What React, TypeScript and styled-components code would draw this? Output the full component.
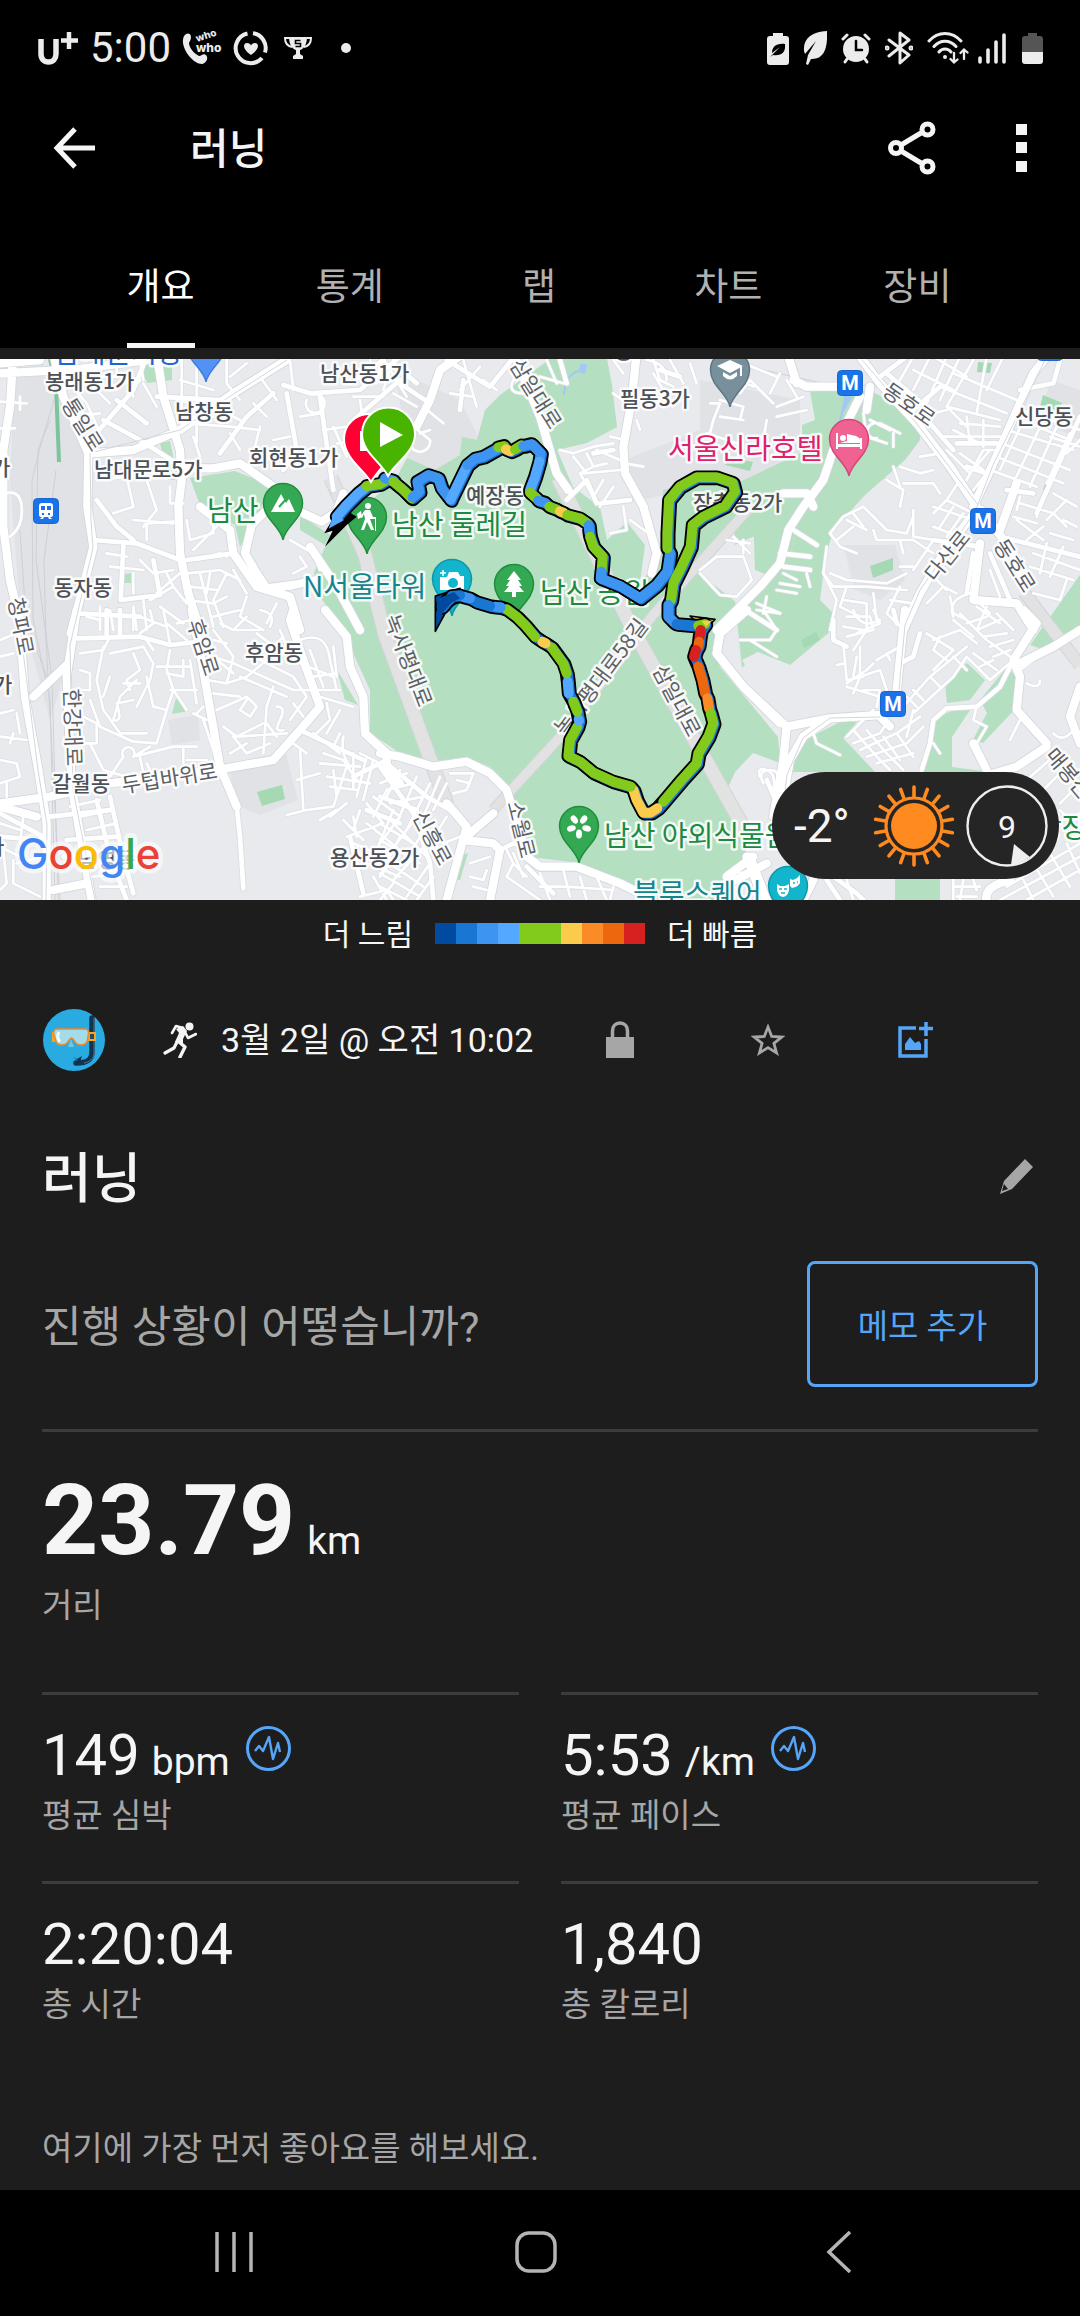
import React from "react";
import styled, { createGlobalStyle, css } from "styled-components";

const FONT = `Roboto, "Noto Sans CJK KR", sans-serif`;
const KR = `"Noto Sans CJK KR", sans-serif`;

const color = {
  bar: "#000000",
  page: "#1d1d1d",
  text: "#f5f5f5",
  muted: "#a6a6a6",
  tab: "#b1b1b1",
  line: "#3c3c3c",
  blue: "#55a5f8",
};

const GlobalStyle = createGlobalStyle`
  * { box-sizing: border-box; }
  body { margin: 0; background: ${color.bar}; font-family: ${FONT}; color: ${color.text}; }
  h1, h2, p, dl, dd, dt, ul { margin: 0; padding: 0; font-weight: 400; }
  svg { display: block; flex: none; }
`;

/* ---------- layout ---------- */

const Screen = styled.div`
  display: flex;
  flex-direction: column;
  min-height: 100vh;
  background: ${color.page};
`;

const TopBar = styled.header`
  background: ${color.bar};
`;

const StatusBar = styled.div`
  display: flex;
  align-items: center;
  justify-content: space-between;
  height: 96px;
  padding: 0 37px;
  color: #ececec;
`;

const StatusGroup = styled.div<{ $gap: number }>`
  display: flex;
  align-items: center;
  gap: ${(p) => p.$gap}px;
`;

const Clock = styled.time`
  font-size: 42px;
  line-height: 48px;
`;

const MoreDot = styled.span`
  width: 10px;
  height: 10px;
  margin-left: 18px;
  border-radius: 50%;
  background: currentColor;
`;

const plainButton = css`
  display: flex;
  align-items: center;
  justify-content: center;
  margin: 0;
  padding: 0;
  border: 0;
  background: none;
  color: inherit;
  font-family: inherit;
  cursor: pointer;
`;

const IconButton = styled.button<{ $width: number; $color?: string }>`
  ${plainButton}
  flex: none;
  width: ${(p) => p.$width}px;
  height: 84px;
  color: ${(p) => p.$color ?? "inherit"};
`;

const Toolbar = styled.div`
  display: flex;
  align-items: center;
  height: 104px;
  padding: 0 16px 0 32px;
`;

const ToolbarTitle = styled.h1`
  flex: 1;
  padding: 4px 0 0 74px;
  font-size: 42px;
  font-weight: 500;
  line-height: 56px;
`;

const Tabs = styled.nav`
  display: grid;
  grid-template-columns: repeat(5, 1fr);
  height: 148px;
  padding: 20px 68px 0 66px;
`;

const TabCell = styled.div`
  display: flex;
  justify-content: center;
`;

const Tab = styled.button<{ $active?: boolean }>`
  ${plainButton}
  border-top: 5px solid transparent;
  border-bottom: 5px solid ${(p) => (p.$active ? "#f5f5f5" : "transparent")};
  color: ${(p) => (p.$active ? "#ffffff" : color.tab)};
  font-size: 37px;
`;

const MapSection = styled.section`
  position: relative;
  margin-top: 11px;
  overflow: hidden;
  background: #e8eaed;
`;

const MapDrawing = styled.svg`
  width: 100%;
  height: auto;
`;

const WeatherPill = styled.div`
  position: absolute;
  right: 21px;
  bottom: 21px;
  display: flex;
  align-items: center;
  gap: 10px;
  width: 287px;
  height: 107px;
  padding: 0 10px 0 22px;
  border-radius: 54px;
  background: #252525;
`;

const Temperature = styled.span`
  flex: 1;
  font-size: 46px;
`;

const Legend = styled.div`
  display: flex;
  align-items: center;
  justify-content: center;
  gap: 22px;
  height: 66px;
  font-size: 30px;
  line-height: 40px;
`;

const LegendText = styled.span`
  padding-top: 4px;
`;

const LegendScale = styled.div`
  display: flex;
`;

const Swatch = styled.span<{ $fill: string }>`
  width: 21px;
  height: 21px;
  background: ${(p) => p.$fill};
`;

const ActivityRow = styled.div`
  display: flex;
  align-items: center;
  height: 148px;
  padding: 0 90px 0 43px;
`;

const ActivityWhen = styled.p`
  display: flex;
  flex: 1;
  align-items: center;
  gap: 24px;
  padding-left: 58px;
  font-size: 34px;
  line-height: 46px;
  white-space: nowrap;
`;

const TitleRow = styled.div`
  display: flex;
  align-items: center;
  justify-content: space-between;
  height: 126px;
  padding: 0 22px 0 42px;
`;

const ActivityTitle = styled.h2`
  padding-top: 6px;
  font-size: 54px;
  font-weight: 500;
  line-height: 68px;
`;

const Body = styled.div`
  padding: 0 42px;
`;

const NoteRow = styled.div`
  display: flex;
  align-items: center;
  justify-content: space-between;
  padding: 21px 0 42px;
`;

const Prompt = styled.p`
  padding-top: 6px;
  color: ${color.muted};
  font-size: 43px;
  line-height: 56px;
`;

const NoteButton = styled.button`
  ${plainButton}
  width: 231px;
  height: 126px;
  border: 3px solid ${color.blue};
  border-radius: 8px;
  color: ${color.blue};
  font-size: 33px;
`;

const StatGrid = styled.dl`
  display: grid;
  grid-template-columns: 1fr 1fr;
  column-gap: 42px;
`;

const Stat = styled.div<{ $wide?: boolean }>`
  display: flex;
  flex-direction: column-reverse;
  justify-content: flex-end;
  grid-column: ${(p) => (p.$wide ? "1 / -1" : "auto")};
  min-height: ${(p) => (p.$wide ? 263 : 189)}px;
  padding-top: ${(p) => (p.$wide ? 31 : 26)}px;
  border-top: 3px solid ${color.line};
`;

const StatLabel = styled.dt`
  margin-top: 7px;
  color: ${color.muted};
  font-size: 33px;
  line-height: 40px;
`;

const StatValue = styled.dd<{ $wide?: boolean }>`
  display: flex;
  align-items: baseline;
  gap: 12px;
  font-size: ${(p) => (p.$wide ? 98 : 58)}px;
  font-weight: ${(p) => (p.$wide ? 700 : 400)};
  line-height: ${(p) => (p.$wide ? 116 : 68)}px;
`;

const Unit = styled.span`
  font-size: 39px;
  font-weight: 400;
  line-height: 40px;
`;

const ZoneButton = styled.button`
  ${plainButton}
  align-self: flex-start;
  margin: 5px 0 0 4px;
  color: ${color.blue};
`;

const Likes = styled.p`
  padding: 57px 42px 19px;
  color: ${color.muted};
  font-size: 33px;
  line-height: 44px;
`;

const SystemNav = styled.footer`
  display: grid;
  grid-template-columns: repeat(3, 1fr);
  justify-items: center;
  align-items: center;
  height: 126px;
  margin-top: auto;
  padding: 0 90px 2px 83px;
  background: ${color.bar};
  color: #b4b4b4;
`;

/* ---------- status icons ---------- */

const Carrier = () => (
  <svg width="42" height="34" viewBox="0 0 42 34" fill="none" stroke="currentColor">
    <path d="M4 8v15c0 5 3 8 7.500 8s7.500-3 7.500-8V8" strokeWidth="5.500" />
    <path d="M32 1v17M24 9.500h17" strokeWidth="4.500" />
  </svg>
);

const WhoCall = () => (
  <svg width="40" height="36" viewBox="0 0 40 36" fill="currentColor">
    <path d="M2 6c3-4 7-3 7 1 0 4-2 4-2 7 1 5 6 10 10 12 3 0 4-3 7-1 3 3 0 8-4 9C10 34-3 16 2 6z" />
    <g fontFamily="Inter, sans-serif" fontWeight="800">
      <text x="15" y="12" fontSize="10" transform="rotate(-18 15 12)">who</text>
      <text x="14" y="22" fontSize="12">who</text>
    </g>
  </svg>
);

const HeartRing = () => (
  <svg width="36" height="36" viewBox="0 0 36 36" fill="none" stroke="currentColor" strokeWidth="4">
    <path d="M20 3.200A15 15 0 0 1 32 22.500M29 28A15 15 0 1 1 14.500 3.500" />
    <path d="M18 25c-9-6-8-12-4-12 2 0 3.500 1 4 2.500C18.500 14 20 13 22 13c4 0 5 6-4 12z" fill="currentColor" stroke="none" />
  </svg>
);

const Trophy = () => (
  <svg width="32" height="24" viewBox="-4 0 32 24" fill="none" stroke="currentColor" strokeWidth="2">
    <path d="M5 2H1c0 5 2 8 7 9M23 2h4c0 5-2 8-7 9" />
    <path d="M5 1h18c0 7-3 12-7 13v4l3 2v3H9v-3l3-2v-4C8 13 5 8 5 1z" fill="currentColor" stroke="none" />
    <path d="M16.500 4.500h-5v3h5v3h-5" stroke="#000" strokeWidth="1.600" />
  </svg>
);

const BatteryLeaf = () => (
  <svg width="22" height="33" viewBox="0 0 22 33" fill="currentColor">
    <path d="M6 4V1h10v3h3q3 0 3 3v23q0 3-3 3H3q-3 0-3-3V7q0-3 3-3z" />
    <path d="M3 25l3-2c8 1 13-2 12-11C9 11 5 15 5 21l8-6-6 6z" fill="#000" />
  </svg>
);

const Leaf = () => (
  <svg width="24" height="34" viewBox="0 0 24 34" fill="currentColor">
    <path d="M24 0C9 1 0 7 1 20l1 3 11-13L5 24 3 33l2 1 3-6c10 0 17-5 16-28z" />
  </svg>
);

const Alarm = () => (
  <svg width="30" height="32" viewBox="0 0 30 32" fill="none" stroke="currentColor" strokeLinecap="round">
    <path d="M2 7l4-4M28 7l-4-4M6 27l-2 3M24 27l2 3" strokeWidth="3" />
    <circle cx="15" cy="17" r="13" fill="currentColor" stroke="none" />
    <path d="M15 9v9h6" stroke="#000" strokeWidth="2.500" />
  </svg>
);

const Bluetooth = () => (
  <svg width="28" height="34" viewBox="0 0 28 34" fill="none" stroke="currentColor" strokeWidth="3" strokeLinejoin="round" strokeLinecap="round">
    <path d="M4 9l20 15-9 8V2l9 7L4 25" />
    <circle cx="2" cy="17" r="1" /><circle cx="26" cy="17" r="1" />
  </svg>
);

const Wifi = () => (
  <svg width="42" height="34" viewBox="0 0 42 34" fill="none" stroke="currentColor" strokeWidth="3" strokeLinecap="round">
    <path d="M2 10C11 0 25 0 34 10M7 15.500c6-7 16-7 22 0M12 21c3-4 9-4 12 0" />
    <circle cx="18" cy="26" r="2" fill="currentColor" stroke="none" />
    <path d="M27 22v9m-3.500-3l3.500 3.500 3.500-3M37 28v-9m-3.500 3l3.500-3.500 3.500 3" strokeWidth="2.300" />
  </svg>
);

const Signal = () => (
  <svg width="30" height="32" viewBox="0 0 30 32" stroke="currentColor" strokeWidth="3.600" strokeLinecap="round">
    <path d="M2 26v4M10 18v12M18 10v20M26 3v27" />
  </svg>
);

const Battery = () => (
  <svg width="21" height="32" viewBox="0 0 21 32">
    <path d="M6 4V1h9v3h3q3 0 3 3v13H0V7q0-3 3-3z" fill="#555" />
    <path d="M0 20h21v9q0 3-3 3H3q-3 0-3-3z" fill="currentColor" />
  </svg>
);

/* ---------- page icons ---------- */

const BackArrow = () => (
  <svg width="42" height="42" viewBox="0 0 42 42" fill="none" stroke="currentColor" strokeWidth="5">
    <path d="M22 2L4 21l18 19M4 21h38" />
  </svg>
);

const Share = () => (
  <svg width="48" height="54" viewBox="0 0 48 54" fill="none" stroke="currentColor" strokeWidth="5">
    <path d="M13 24l20-12M13 30l20 12" />
    <circle cx="8" cy="27" r="5.500" /><circle cx="39.500" cy="8.500" r="5.500" /><circle cx="39.500" cy="45.500" r="5.500" />
  </svg>
);

const More = () => (
  <svg width="12" height="50" viewBox="0 0 12 50" fill="currentColor">
    <path d="M0 1h11v11H0zM0 19h11v11H0zM0 38h11v11H0z" />
  </svg>
);

const Avatar = () => (
  <svg width="62" height="62" viewBox="0 0 62 62" role="img" aria-label="프로필">
    <circle cx="31" cy="31" r="31" fill="#29abe2" />
    <path d="M49 9v34c0 8-5 11-16 11" fill="none" stroke="#0d3552" strokeWidth="5.500" strokeLinecap="round" />
    <path d="M51 9v35c0 6-5 9-10 10" fill="none" stroke="#58738a" strokeWidth="1" />
    <path d="M30 48l4 2 5-3-2 6z" fill="#0d3552" />
    <path d="M9 23h4v10H9zM44 23h9v9h-9z" fill="#f9a61b" />
    <path d="M47 25h4v5h-4z" fill="#29485f" />
    <path d="M14 20h28q4 0 3.500 5l-1 6q-1 5-6 5-5 0-7-4-2-3-3-3t-3 3q-2 4-7 4-5 0-6-5l-2-6q0-5 3.500-5z" fill="#a5dbe8" stroke="#e98b2a" strokeWidth="1.600" />
    <path d="M16 23q-3 5 1 10" stroke="#f0fbff" strokeWidth="3" fill="none" />
    <path d="M25 38l3-8 3 8" fill="#6fc7e4" />
  </svg>
);

const Runner = () => (
  <svg width="34" height="36" viewBox="0 0 34 36" fill="none" stroke="currentColor" strokeLinejoin="round" strokeLinecap="round">
    <circle cx="26.500" cy="4.500" r="4" fill="currentColor" stroke="none" />
    <path d="M20 4l4 5-4 8 0 4-8-1 4-9-3-4z" fill="currentColor" stroke="none" />
    <path d="M21 8l4 8 8-4M9 11l4-7 7 2" strokeWidth="2.600" />
    <path d="M15 19l7 6-5 10" strokeWidth="3.400" />
    <path d="M14 20l-3 6-9 5" strokeWidth="3.200" />
  </svg>
);

const Lock = () => (
  <svg width="28" height="38" viewBox="0 0 28 38" fill="none" stroke="currentColor">
    <path d="M6.500 17v-7c0-5 3-8 7.500-8s7.500 3 7.500 8v7" strokeWidth="3.500" />
    <path d="M0 16h28v21H0z" fill="currentColor" stroke="none" />
  </svg>
);

const Star = () => (
  <svg width="34" height="34" viewBox="0 0 34 34" fill="none" stroke="currentColor" strokeWidth="2.800">
    <path d="M17 4l3.700 9.500 10 .5-7.800 6.300L25.600 30 17 24.600 8.400 30l2.700-9.700L3.300 14l10-.5z" />
  </svg>
);

const AddImage = () => (
  <svg width="36" height="38" viewBox="0 0 36 38" fill="none" stroke="currentColor" strokeWidth="3.500">
    <path d="M18 7H2v28h26V18M21 7.500h14M28 1v14" />
    <path d="M7 29v-6l5-7 5 6 4-2 2 3v6z" fill="currentColor" stroke="none" />
  </svg>
);

const Pencil = () => (
  <svg width="36" height="36" viewBox="0 0 36 36" fill="currentColor">
    <path d="M27 0l8 8-21 22-12 5 4-13zM6 25l-2 7 6-2z" fillRule="evenodd" />
  </svg>
);

const Pulse = () => (
  <svg width="45" height="45" viewBox="0 0 45 45" fill="none" stroke="currentColor">
    <circle cx="22.500" cy="22.500" r="21" strokeWidth="3" />
    <path d="M9 25l4-5 4 5 6-14 4 22 5-16 2 9" strokeWidth="2.400" strokeLinejoin="round" />
  </svg>
);

const Sun = () => (
  <svg width="82" height="82" viewBox="-41 -41 82 82" role="img" aria-label="맑음">
    <circle r="23" fill="#ff8a1f" />
    <circle r="28" fill="none" stroke="#ff8a1f" strokeWidth="3.200" />
    <g stroke="#ff8a1f" strokeWidth="3.600" strokeLinecap="round">
      {Array.from({ length: 18 }, (_, i) => (
        <path key={i} d="M0-29V-39" transform={`rotate(${i * 20})`} />
      ))}
    </g>
  </svg>
);

const Wind = () => (
  <svg width="84" height="84" viewBox="-42 -42 84 84" role="img" aria-label="풍속 9">
    <circle r="39.500" fill="none" stroke="#eee" strokeWidth="2.400" />
    <path d="M7 18l16 13q-9 7-19 8z" fill="#eee" />
    <text y="12" textAnchor="middle" fill="#f5f5f5" fontFamily="Roboto, sans-serif" fontSize="32">9</text>
  </svg>
);

/* ---------- map ---------- */

// The map is drawn in six tiles, each with three units to a pixel.
const Tile = ({ x, y, children }: { x: number; y: number; children: React.ReactNode }) => (
  <g transform={`translate(${x} ${y}) scale(0.33333)`}>{children}</g>
);

type Roads = { major: string; mid: string; local: string };

const tiles: { x: number; y: number; roads: Roads }[] = [
  {
    x: 0,
    y: 340,
    roads: {
      major:
        "M40 40L30 200 10 330 10 560 30 720 65 870M160 40L190 170 265 340 262 500 280 620 250 740 212 880M470 40L490 170 540 330 545 420 535 500 540 640 565 760 600 870M545 385L640 385 720 370 820 440 900 515 965 545 1010 515 1030 460M830 480L755 555 735 640 770 700 800 745 880 735 950 720M600 500L690 570 700 640 770 740 870 770 900 870M0 100L230 88 440 60M270 340L400 330 540 270 700 160 860 60M0 70L120 60M930 620L1010 740 1080 870",
      mid: "M280 600L410 610 540 660M290 480L350 560 400 600M370 620L362 780 480 765 460 660M280 290L400 150 440 50M310 240L420 300 545 380M350 180L440 250M1200 50L1080 150 930 160 850 135M960 170L985 350 1000 450M860 160L890 330 850 390M470 170L660 180M820 160L740 230 660 340M1050 250L1200 120M230 820L420 830M700 640L560 660M1050 130L1150 60",
      local:
        "M0 185L80 190M60 170L60 210M0 265L45 265M0 465Q60 440 65 500T30 590M190 110L260 190 300 280M210 200Q240 230 300 220M250 110L330 190M300 110L380 110 400 170M180 60L270 110M350 60L350 110M420 60L430 120M430 130L470 200M310 260L420 120M545 60V250M590 60L590 310M540 120L640 150M545 180L640 230M680 60L680 130 720 180M740 70L690 110M780 110L830 180M560 250L690 260 780 270M690 280L720 330M580 290L600 350M640 200L720 240M870 60L880 150M920 180A28 28 0 1 0 935 165M900 230L960 220M820 300L870 290M1000 260L1040 350M780 260L760 340M760 190L800 230M300 420L380 410 400 500 340 520M440 420L470 510 430 560M400 540L520 550M440 600L440 550 520 545M510 440V490H550M560 540L570 600 640 580 640 540M580 630L650 560M590 660L660 640 680 650M320 640L380 650M330 680L430 690M400 700V760M420 660L460 700 520 690M540 700L470 760M560 700L660 690 720 720M570 740L650 750M560 780L640 790 680 770M600 700L640 860M680 700L640 780 670 860M450 780L520 740 560 790M480 800L550 850M430 780L440 870M400 800L410 870M500 700L520 740M330 810L340 870M300 800V870M630 700L620 760M700 690L740 760M740 770L720 830 790 870M830 790L800 850M870 600L940 640 960 690M900 650L920 680 880 700M850 590L870 560M970 270L1040 260M1010 310L1080 300M1060 170L1150 170M1080 180L1090 250M1110 60L1130 130M1180 60L1150 150",
    },
  },
  {
    x: 380,
    y: 340,
    roads: {
      major: "M250 40L180 90 150 180 110 260M400 40L480 230 530 400 565 450M770 40L755 180 730 320 735 400 790 500 830 640 815 700",
      mid: "M200 60L330 140 395 60M0 90L40 70 110 130M60 130L150 190M250 120L240 210M540 60L560 130M840 90L900 110M560 480L620 420 650 490M660 490L750 480M640 340L700 330",
      local:
        "M0 40L80 170M40 160L110 200M130 200L190 250M90 310A25 25 0 1 0 150 300L100 260M120 280L150 270M210 160L280 170M250 60L290 200M300 80L240 150M310 120L350 150M400 120Q380 160 430 160M500 60L530 130M480 110L550 130M620 340L640 380 600 400 640 470M640 380L680 370M580 350L620 400M650 330L720 360M610 400L720 390M640 470L670 420M540 330L580 340 640 320 700 310M660 500L700 440M730 500L740 570 690 580M760 430L800 500M730 100L700 60M740 190L700 160M780 270L770 240M740 300L690 290M735 370L790 380M750 540L820 590M820 60L840 120 880 140M870 60L910 130M930 70L950 130M820 100L850 150 920 150M800 60Q860 70 860 120",
    },
  },
  {
    x: 700,
    y: 340,
    roads: {
      major:
        "M480 170L400 330 370 420 310 500 265 570 240 670 180 740 50 870M480 50L540 130 650 250 750 380 830 500M280 120L320 140 440 140M265 50L290 130M510 140L500 210M820 500L880 370 1000 100 1040 50M830 510L730 640 660 760 610 870M845 510L940 640 970 720M900 570L950 430M840 610L820 780 950 790 1000 870M250 460L320 460 340 500",
      mid: "M540 110L620 50M560 100L700 220M640 210L720 140M690 250L760 330M770 310L890 310M800 380L860 400M1080 60L1060 130 960 150M1140 230L1010 520M920 450L1000 460M280 570L350 615M250 680L330 690M900 590L1140 650M870 640L930 780M820 640L800 760M700 600L840 620M120 800L230 870M240 640L330 650",
      local:
        "M100 110L160 140M130 70L230 110M120 160L150 120 220 190M240 100L210 160M260 120L290 170M30 190L60 190 40 240 30 280M60 180L130 200 120 240M60 230L130 240M20 280L110 310M200 240L190 300M230 200L310 170M230 230L320 210M490 220L500 290 560 310M520 250A22 22 0 1 0 530 295M540 250L600 280M510 240L570 270M580 280V320M640 50L600 120M690 50L640 150M740 50L680 190M640 90L760 150M700 50L800 110M780 50L720 180M820 60L740 200M860 50L830 220M910 50L860 150M760 100L950 180M720 140L920 220M740 200L900 240M660 230L740 210M740 200L800 260M780 250L900 260M800 230L810 310M850 240L850 320M760 270L840 310M730 290L900 290M780 340L850 390M800 420L850 330 880 330M740 330L810 400 870 330M860 400L820 450M920 270L1120 330M905 310L1110 390M890 350L1090 430M870 390L1010 440M960 210L1140 270M990 200L900 390M1030 240L940 430M1070 260L990 440M1110 280L1040 430M940 230L1110 300M1050 290L1140 320M700 560L780 590M700 500L820 540M740 480L820 520M700 520L740 480 780 420M720 560L760 500M740 590L790 520M660 350L720 340M600 380L660 400 700 390M560 420L610 450 600 500M610 430L700 430 720 460M580 380L600 440M500 510L560 570 620 580 640 530M640 510V590L700 600M520 570L530 600 640 600M390 580L430 530 490 500 510 520M410 600L460 560M440 540L500 570M460 520L490 560M600 600L610 640M390 580L420 620 470 640M380 620L370 700 400 740 500 740 620 750M600 680L640 680M390 700L440 720 560 730 620 700M370 700L410 780 390 870M440 740L420 800 480 830M430 780L500 790 500 860M520 760L530 840M600 740L560 820 600 860M640 600L700 640M700 600L640 690M570 780L640 790M710 720L740 750M680 790L730 740 770 760M750 770L760 820 800 840M870 820L810 760Q740 780 760 830M830 800L900 850M860 800L830 870M890 820L940 870M940 530L1010 550M960 490L1060 520 1100 560M950 540L1030 600M980 600L1030 560M1010 530L1030 470M1060 460L1130 500M1040 540L1100 480M1090 540L1130 560M1050 580L1120 600M1000 640L1140 690M990 680L1120 720M1040 610L1020 700M1090 620L1050 710M1000 760L1080 780 1100 720M250 700L290 720M240 730L300 740M230 750L290 760M320 700L330 740M170 790L240 820M200 770L190 820M80 600L150 610M100 590L150 640M130 600V640M0 690L50 650 130 650 155 720 110 770 60 765 0 700M1100 340L1140 300M960 470L950 510M870 690L900 770",
    },
  },
  {
    x: 0,
    y: 610,
    roads: {
      major:
        "M60 50L75 260 115 480 140 640 140 870M230 0L200 200 215 530 275 870M575 0L610 180 660 470 710 590M0 580L150 560 330 520 650 480 820 450 900 360 960 290 910 150 870 30 880 0M975 0L1040 80 1050 170 1090 260 1095 370 1160 430 1160 480 1200 520M100 260L200 165M0 590L110 620M160 840L260 820",
      mid: "M230 85L420 80 510 105 600 95M320 0V80M360 0V80M200 690L350 680M190 740L340 720M150 620L330 600M710 590L720 680 730 835M290 570L330 740 380 870M330 560L370 740 400 850M0 680L120 690M900 360L1090 450M0 610L130 680M1200 640L1100 600M1090 850L1050 680M1160 450L1060 500",
      local:
        "M240 180L270 190V240L240 240M240 130L310 120 330 80M310 110L290 210 310 300 360 370 440 370M330 130L430 110 460 160 450 210 410 290M400 130L420 180 380 210 390 240M330 200L310 260M410 210L360 260 340 330Q370 340 350 280L400 270M370 220L420 220M440 200L460 290 500 300M270 270L300 350 400 395 470 400 500 300 520 240 500 180 510 120M440 90L460 120M470 170L570 170M510 240L590 240M500 190L550 200 550 150M520 240L560 300M580 310L620 330M570 150L590 280M250 320L290 340V400L250 400M270 400L310 480 380 500M450 410L400 440A18 18 0 1 0 370 440L330 500M400 440L520 410 590 410M550 410V460M420 440L430 490M560 450H620M440 460L460 500M610 330L640 420 660 490M590 310L610 290M620 210L680 220 740 200 800 150M640 250L720 260M650 300L740 260M700 190L640 140 610 110M680 100L640 90M680 220L700 140 640 60M720 200L860 260M780 150L880 200M640 140L700 160 880 240 940 240M740 270L720 300 750 320 770 290 740 260M670 350L710 380 860 370M690 430L740 400M700 380L740 430 810 400M790 430L800 290 820 230M710 380L790 340M800 340L830 380M830 290Q860 290 840 330T850 360M880 280L910 320M880 200L920 260 870 330M660 40L700 60 780 60M640 20L720 0M780 0Q830 10 810 50M700 60L740 20M770 70L850 130M850 80L800 130M840 60L860 110M900 90Q980 60 990 150L1010 240M930 120L970 230M900 160L1000 200M940 200L1010 190M960 260L1060 290M930 240L1020 240M1000 110L1010 200M980 280L990 330 940 380M1020 300L980 370M940 370L1020 430M1030 380Q1020 430 1050 470M970 430L1030 450 1070 510M960 460L1080 470M980 500L1110 520M990 530L1070 540M1000 480L1010 560M1060 430V540M1100 440L1070 560M1120 450L1090 570M1080 430L1140 460M1040 470L1000 590 920 600 860 615M900 420L910 600M890 510L960 490M880 400L920 430M960 630L1010 600M990 620L1040 580M1020 370L1000 410M1030 630L1090 690M1060 620L1070 680M1040 680L1150 640 1100 580M1120 560L1200 620M1160 540L1120 620M1180 600L1130 720M1200 680L1140 800M1060 700L1200 760M1100 640L1200 720M1100 760L1200 800M1080 600L1060 660M1120 800L1160 870M1180 820L1140 870M1080 860L1160 840 1180 870M50 760L130 740M0 310L40 300M0 380L80 390M30 400L40 370M0 450L50 460 60 500 0 520M20 520V560M50 310L60 370M0 140L40 130M0 90L50 70M0 840L20 820 10 720M40 750L40 820 120 860M0 640L60 660M0 710L60 740M70 620L60 700M300 570L210 590M240 620L340 600M260 660L350 640M300 830L380 830M280 800L370 790M260 20L300 30M400 0V60M450 0L460 40 420 70M420 20L500 50M490 0L510 100M530 40L570 30M500 40L560 90",
    },
  },
  {
    x: 380,
    y: 610,
    roads: {
      major:
        "M0 430L60 440 160 470 260 455 330 490 380 540 410 640 440 740 480 770 590 770 720 820 800 860M200 580L260 650 200 870M1100 0L1020 70 1010 130 1090 230 1200 340M340 610L270 670M1160 760L1030 830M1110 740L1160 870M250 690L340 700 360 720 330 870",
      mid: "M0 470L100 610 150 760 160 870M20 460L140 560 210 600M360 720L400 700 430 710M0 560L110 600M440 770L520 850M1160 510L1200 600",
      local:
        "M20 540L100 520M30 580L130 560M0 520L80 490M60 480L20 560M110 500L50 640M150 520L80 660M180 500L130 620M200 520L160 600M210 490L280 490 260 540 220 550M230 510L270 520M60 620L0 700M110 620L20 740M140 650L70 760M0 640L100 700M0 690L120 760M20 620L140 740M0 740L130 830M0 790L120 860M0 830L80 870M140 700L40 810M150 760L80 860M160 800L110 870M30 760L0 800M200 620L150 700M190 700L240 680M270 760L330 740M270 800L310 810 320 780M280 830L320 840M380 720L400 760 380 800 480 870M400 730L430 800M400 760L440 800M480 790L510 870M550 780L570 860M600 800L620 870M560 830L700 840M480 830L560 830M650 800L680 870M700 830L690 870M1150 520Q1130 480 1170 480T1180 540M1080 790L1120 780",
    },
  },
  {
    x: 700,
    y: 610,
    roads: {
      major:
        "M140 0L60 70 50 130 130 230 260 350 250 450 220 620M540 315L390 325 310 380 270 450 250 560M615 0L590 240M260 350L390 325M970 0L1010 40 940 150 960 200 950 300 1040 400M1140 230L1110 320 1140 400M1040 410L950 470 850 500M820 400L860 480M1140 60L1060 110 960 160M160 740L80 800M140 740L190 870M340 810L310 870M540 320L570 350M930 810Q850 830 860 870",
      mid: "M940 150L900 230 830 290 740 295 700 330 690 400 665 480M610 155L640 140 660 70M400 30L400 90 440 110M580 0L590 40M400 800L470 850 490 870M380 810L420 870M300 800L280 870",
      local:
        "M340 370L350 400 420 435M150 90L230 140M120 90L210 90 230 60 190 0M170 0L240 10M430 100L440 210 490 200M410 165L435 160M480 110L480 200M460 250L480 200 540 180 560 240M440 220L500 180 520 160M440 230L540 260M530 150L600 110M560 130L570 150M440 20L510 20 520 60 440 80M430 50L490 60M500 60L460 120M460 0Q480 60 540 30M520 0L540 40 470 70M470 140L460 200M490 240L540 240 530 290M610 290L690 200 800 110M640 310L760 200 800 140 870 210 940 150M680 70L760 120 700 180M700 90L780 60 830 100M760 30L820 80M780 10L860 90 930 140M720 80L700 120 740 150M800 40L860 20M830 60L900 30M850 80L920 70M870 110L940 90M880 140L930 120M690 200L720 230M640 240L670 270M620 260L650 290M820 130L890 180M840 170L880 150M760 140L800 180M440 380L520 300M460 400L540 370 560 340M480 420L590 370 660 320M500 440L620 400 670 350M530 460L640 430M460 360L530 440 570 480M500 360L560 430 610 480M550 380L600 450M590 370L640 440M640 300L620 380M700 400L720 430M830 290L820 330 860 350 830 400M960 330L930 390M980 220Q1020 240 1020 210M1060 370Q1090 400 1120 360M180 500Q170 470 200 480T220 540M1060 440L980 510M1100 470L1010 560M1140 520L1080 580M1140 700L920 830M1140 740L900 870M1140 780L980 870M1100 700L1140 790M1050 730L1110 830M1000 760L1060 860M960 790L1000 870M1080 600L1140 660M760 806V870M790 810L780 870M760 830H840M770 860H830M820 810L830 840M440 810L460 870M970 160Q1010 120 1000 150L960 180",
    },
  },
];

const RoadLayer = ({ kind, width, stroke }: { kind: keyof Roads; width: number; stroke: string }) => (
  <g fill="none" stroke={stroke} strokeWidth={width} strokeLinecap="round" strokeLinejoin="round">
    {tiles.map((t) => (
      <Tile key={`${t.x}-${t.y}`} x={t.x} y={t.y}>
        <path d={t.roads[kind]} />
      </Tile>
    ))}
  </g>
);

const pace = {
  navy: "#004a9f",
  deep: "#1976d2",
  blue: "#3d95f1",
  sky: "#55a8ff",
  green: "#82cb1d",
  yellow: "#fbcc4c",
  orange: "#fb8b27",
  rust: "#ec670d",
  red: "#d72121",
};

const legendScale = [
  pace.navy, pace.deep, pace.blue, pace.sky, pace.green,
  pace.green, pace.yellow, pace.orange, pace.rust, pace.red,
];

// Track pieces in the units of the upper middle tile.
const track: [keyof typeof pace, string][] = [
  ["sky", "-130,530 -100,495 -65,460 -40,440"],
  ["green", "-40,438 0,432 20,420"],
  ["blue", "15,415 40,422"],
  ["green", "40,425 70,450 95,475"],
  ["blue", "98,472 118,455 112,425 145,405 175,415 185,445 212,480"],
  ["sky", "212,478 240,420 262,375"],
  ["blue", "262,375 285,356 310,350 355,325"],
  ["green", "355,322 372,318"],
  ["yellow", "378,328 392,334"],
  ["green", "405,328 425,316"],
  ["blue", "430,318 455,312 482,340 478,365"],
  ["sky", "478,365 465,410 450,450"],
  ["green", "450,458 470,475"],
  ["blue", "475,482 495,488"],
  ["green", "508,500 530,508"],
  ["yellow", "540,514 550,518"],
  ["green", "562,525 600,535 622,550"],
  ["blue", "626,556 628,578"],
  ["green", "630,590 640,620 668,650 665,690"],
  ["blue", "664,695 662,715 720,738 780,775 830,735 862,695 870,640"],
  ["green", "862,625 862,580 867,480 900,440 950,412 1010,412 1058,428 1065,455 1035,498 970,530 938,555 932,620 905,680 880,730 873,780"],
  ["blue", "865,795 865,830 885,850"],
  ["deep", "890,852 950,857"],
  ["green", "955,857 975,852"],
  ["red", "962,870 958,895"],
  ["rust", "957,905 955,918"],
  ["red", "948,930 942,950"],
  ["rust", "955,980 967,1020 975,1060"],
  ["orange", "982,1075 987,1105"],
  ["green", "992,1120 1000,1150 985,1190 955,1240 950,1270 905,1320 850,1385"],
  ["yellow", "832,1405 812,1418 790,1418 770,1380 760,1350"],
  ["green", "752,1340 700,1325 640,1298 600,1265 565,1248 570,1200 592,1160"],
  ["sky", "597,1142 596,1138"],
  ["green", "592,1115 580,1085"],
  ["sky", "566,1060 563,1025"],
  ["green", "560,1000 550,970 515,922"],
  ["yellow", "497,910 487,905"],
  ["green", "465,890 435,855 410,830 380,808"],
  ["blue", "362,802 345,800"],
  ["deep", "330,798 290,786"],
  ["blue", "270,775 250,770"],
  ["deep", "240,766 215,768"],
  ["navy", "200,782 185,800"],
];

const tracePath = "M" + track.map(([, pts]) => pts).join(" ");

const Track = () => (
  <Tile x={380} y={340}>
    <g fill="none" strokeLinecap="round" strokeLinejoin="round">
      <path d="M-167 580L-120 500-70 530-100 555-165 620-142 572z" fill="#000" />
      <path d="M166 768L240 745 250 780 205 802 166 874z" fill={pace.navy} stroke="#000" strokeWidth="5" />
      <path d="M930 828L1005 838 975 870z" fill={pace.yellow} stroke="#000" strokeWidth="5" />
      <path d={tracePath} stroke="#000" strokeWidth="41" />
      <path d={tracePath} stroke="#000" strokeWidth="41" transform="translate(4 3)" />
      <path d={tracePath} stroke={pace.deep} strokeWidth="30" transform="translate(4 3)" />
      {track.map(([c, pts]) => (
        <path key={pts} d={`M${pts}`} stroke={pace[c]} strokeWidth="30" />
      ))}
      <path d="M-154 566L-138 518-108 540z" fill={pace.sky} />
      <path d="M170 778L222 756 240 775 200 796 172 850z" fill={pace.navy} />
      <path d="M965 842L996 842 978 860z" fill={pace.yellow} />
    </g>
  </Tile>
);

const labelInk = { area: "#4d5157", road: "#5c6066", park: "#1d8a42", sight: "#12858f", hotel: "#e0206b", market: "#1a66d6" };

type MapLabel = { t: string; x: number; y: number; r?: number; k?: keyof typeof labelInk };

const labels: MapLabel[] = [
  { t: "남대문시장", x: 54, y: 363, k: "market" },
  { t: "봉래동1가", x: 45, y: 389 },
  { t: "남산동1가", x: 320, y: 381 },
  { t: "남창동", x: 175, y: 419 },
  { t: "회현동1가", x: 249, y: 465 },
  { t: "남대문로5가", x: 94, y: 477 },
  { t: "가", x: -9, y: 475 },
  { t: "가", x: -7, y: 692 },
  { t: "사", x: -15, y: 854 },
  { t: "동자동", x: 54, y: 595 },
  { t: "예장동", x: 466, y: 503 },
  { t: "필동3가", x: 620, y: 406 },
  { t: "장충동2가", x: 693, y: 510 },
  { t: "신당동", x: 1015, y: 424 },
  { t: "후암동", x: 245, y: 660 },
  { t: "갈월동", x: 52, y: 791 },
  { t: "용산동2가", x: 330, y: 865 },
  { t: "남영동", x: 78, y: 867 },
  { t: "동", x: 614, y: 358 },
  { t: "남산", x: 207, y: 521, k: "park" },
  { t: "남산 둘레길", x: 392, y: 535, k: "park" },
  { t: "남산 공원", x: 540, y: 603, k: "park" },
  { t: "남산 야외식물원", x: 604, y: 846, k: "park" },
  { t: "광장", x: 1036, y: 838, k: "park" },
  { t: "N서울타워", x: 303, y: 597, k: "sight" },
  { t: "블루스퀘어", x: 633, y: 904, k: "sight" },
  { t: "서울신라호텔", x: 668, y: 459, k: "hotel" },
  { t: "통일로", x: 61, y: 404, r: 58, k: "road" },
  { t: "청파로", x: 8, y: 599, r: 79, k: "road" },
  { t: "한강대로", x: 64, y: 689, r: 88, k: "road" },
  { t: "후암로", x: 187, y: 622, r: 72, k: "road" },
  { t: "두텁바위로", x: 123, y: 793, r: -9, k: "road" },
  { t: "녹사평대로", x: 384, y: 618, r: 69, k: "road" },
  { t: "녹사평대로58길", x: 565, y: 737, r: -53, k: "road" },
  { t: "소월로", x: 507, y: 803, r: 76, k: "road" },
  { t: "신흥로", x: 412, y: 816, r: 62, k: "road" },
  { t: "삼일대로", x: 509, y: 365, r: 58, k: "road" },
  { t: "삼일대로", x: 652, y: 670, r: 62, k: "road" },
  { t: "동호로", x: 881, y: 394, r: 35, k: "road" },
  { t: "동호로", x: 993, y: 545, r: 58, k: "road" },
  { t: "다산로", x: 935, y: 583, r: -51, k: "road" },
  { t: "매봉산로", x: 1044, y: 756, r: 50, k: "road" },
];

const MapText = styled.text<{ $kind: keyof typeof labelInk }>`
  fill: ${(p) => labelInk[p.$kind]};
  stroke: #ffffff;
  stroke-opacity: 0.85;
  stroke-width: 5px;
  stroke-linejoin: round;
  paint-order: stroke;
  font-family: ${KR};
  font-weight: ${(p) => (p.$kind === "area" ? 500 : 400)};
  font-size: ${(p) => (p.$kind === "area" || p.$kind === "road" ? 21 : 28)}px;
`;

const GoogleMark = styled.text`
  font-family: Inter, sans-serif;
  font-size: 42px;
  font-weight: 500;
  stroke: #ffffff;
  stroke-opacity: 0.6;
  stroke-width: 9px;
  stroke-linejoin: round;
  paint-order: stroke;
`;

const Poi = ({ x, y, fill, edge, children }: { x: number; y: number; fill: string; edge: string; children?: React.ReactNode }) => (
  <g transform={`translate(${x} ${y})`}>
    <path d="M0 37C-2 24-19.500 16-19.500 0a19.500 19.500 0 0 1 39 0C19.500 16 2 24 0 37z" fill={fill} stroke={edge} strokeWidth="1.500" />
    <g fill="#fff">{children}</g>
  </g>
);

const Metro = ({ x, y }: { x: number; y: number }) => (
  <g transform={`translate(${x} ${y})`}>
    <rect x="-12.500" y="-12.500" width="25" height="25" rx="4" fill="#1a73e8" stroke="#1a66d0" />
    <text y="7" textAnchor="middle" fill="#fff" fontFamily="Roboto, sans-serif" fontWeight="700" fontSize="20">M</text>
  </g>
);

const CourseMap = () => (
  <MapDrawing viewBox="0 359 1080 541" role="img" aria-label="코스 지도">
    <rect y="359" width="1080" height="541" fill="#e8eaed" />
    <g fill="#e0e2e6">
      <path d="M15 370H55L90 450 95 560 75 640 50 720 20 610 10 480z" />
      <path d="M395 370L460 400 480 440 450 490 410 470z" />
      <path d="M700 430L700 380 800 400 800 470 690 490 640 500 625 460z" />
      <path d="M843 545L895 545 905 580 880 600 855 590z" />
      <path d="M230 770L285 750 298 800 260 815 236 805z" />
      <path d="M168 720L198 715 200 740 172 745zM1050 380L1080 390V440L1040 420z" />
    </g>
    <g fill="#b4dfc1">
      <path d="M330 535L314 573 322 600 347 630 353 653 370 690 370 733 400 753 430 762 467 757 490 767 510 787 523 823 530 857 580 863 620 880 647 900 713 900 730 873 747 857 740 817 727 790 735 772 753 753 780 763 778 737 720 667 713 643 737 610 753 563 767 575 790 560 800 500 790 485 803 465 802 425 815 420 810 391 870 391 900 405 920 425 920 440 905 460 865 495 833 530 825 560 820 600 833 613 832 630 790 665 757 652 742 668 735 600 695 570 727 530 753 510 790 480 750 484 720 478 663 490 660 560 640 582 645 545 627 522 607 540 600 507 573 487 557 450 587 443 617 427 612 385 607 359 550 359 500 395 485 410 477 440 462 437 460 455 435 470 407 458 395 480z" />
      <path d="M695 570L753 510 767 575 737 603z" fill="#e8eaed" />
      <path d="M753 510L800 500 790 560 770 576 755 570z" />
      <path d="M733 485L850 430 830 480 790 520 735 545z" />
      <path d="M300 515L330 535 325 545 300 530zM190 478L235 471 273 487 265 500 240 547 235 525 200 505z" />
      <path d="M13 360H43V365L15 366zM146 360L172 366V380L148 383 140 372zM160 443L170 441 178 480 168 480zM123 575L131 573V583L123 583z" />
      <path d="M176 698L188 711 172 714zM337 670L358 705 345 700z" />
      <path d="M797 744L840 722 857 722 843 738 875 772H793zM945 683L967 663 985 680 970 700 947 703z" />
      <path d="M1007 667L1017 677 1017 707 983 743 973 740 987 713 980 700zM933 720L953 710 970 710 952 737 952 767 990 772H922L930 745z" />
      <path d="M1030 645L1080 575V625L1045 650zM895 879H940V900H895z" />
      <path d="M462 855L468 853 460 880 456 880z" />
    </g>
    <path d="M742 660L758 652 790 665 840 640 835 700 850 712 800 722 778 722z" fill="#e8eaed" />
    <g fill="#a5d9b4">
      <path d="M870 566L893 558V570L873 578zM978 362L992 363 990 373 977 372zM1043 395L1062 403 1057 415 1040 407zM1048 476L1053 480 1048 493 1043 490zM257 792L282 785 285 799 262 806z" />
      <path d="M727 457L753 462 750 471 725 465zM801 640L816 632 820 640 804 648z" />
    </g>
    <path d="M50 359L56 385 59 462" fill="none" stroke="#7cc49b" strokeWidth="4" />
    <path d="M845 400L838 430 830 455M585 370L575 372 566 380 564 395" fill="none" stroke="#a3c7f7" strokeWidth="2" />
    <path d="M844 395L852 397 842 415zM580 364L587 364 585 374 579 372z" fill="#a3c7f7" />
    <g fill="none" stroke="#cdd0d5" strokeWidth="1">
      <path d="M54 400L42 440 32 480 33 620 50 700 55 900M50 420L38 450 36 560 52 680 58 900M56 470L44 560 46 640 60 900M20 530L26 620 48 680" />
      <path d="M720 360L830 385 880 386" />
    </g>
    <g fill="none" stroke="#d2d5d8" strokeLinecap="butt">
      <path d="M331 478L365 555 385 635 447 805" strokeWidth="15" />
      <path d="M558 478L633 630 745 830" strokeWidth="15" />
      <path d="M493 810L560 737 653 615 752 505" strokeWidth="11" />
      <path d="M1024 592L1045 620 1080 665" strokeWidth="13" />
      <g stroke="#e2e2e3">
        <path d="M331 478L365 555 385 635 447 805" strokeWidth="13" />
        <path d="M558 478L633 630 745 830" strokeWidth="13" />
        <path d="M493 810L560 737 653 615 752 505" strokeWidth="9" />
        <path d="M1024 592L1045 620 1080 665" strokeWidth="11" />
      </g>
    </g>
    <RoadLayer kind="local" width={12} stroke="#dcdfe4" />
    <RoadLayer kind="mid" width={19} stroke="#d9dce1" />
    <RoadLayer kind="major" width={30} stroke="#d3d6dc" />
    <RoadLayer kind="local" width={8} stroke="#ffffff" />
    <RoadLayer kind="mid" width={14} stroke="#ffffff" />
    <RoadLayer kind="major" width={25} stroke="#ffffff" />
    <g fill="none" stroke="#d3d6dc" strokeWidth="1">
      <path d="M90 453L180 430 235 393 287 360M90 453L91 520 93 548 83 590 70 645 73 790 95 900M862 360L917 424 978 505M1045 360L993 465 975 512 920 590 905 625 899 690M20 627L38 770 47 825 46 900M880 717L830 718 803 738 787 775 783 810" />
    </g>

    {labels.map((l) => (
      <MapText
        key={`${l.t}${l.x}${l.y}`}
        $kind={l.k ?? "area"}
        x={l.x}
        y={l.y}
        transform={l.r ? `rotate(${l.r} ${l.x} ${l.y})` : undefined}
      >
        {l.t}
      </MapText>
    ))}

    <Poi x={206} y={345} fill="#5491f5" edge="#3f7de0" />
    <Poi x={283} y={503} fill="#34a853" edge="#1e8e3e">
      <path d="M-12 9L-2-9 3 0 6-4 12 9z" />
      <path d="M-4 4L5-6" stroke="#34a853" strokeWidth="2" />
    </Poi>
    <Poi x={367} y={517} fill="#34a853" edge="#1e8e3e">
      <circle cx="1" cy="-11" r="3" />
      <path d="M-2-7H3L6 0H9V14H8V2H4L3 2 7 13H4L0 5-3 13H-6L-2 2-3-3-5 1-7 0z" />
      <path d="M-10-3L-6-6-5 0-9 2z" />
    </Poi>
    <Poi x={452} y={579} fill="#12b5cb" edge="#0d97a9">
      <path d="M-12-2H-5L-3-7H6L8-3H12V11H-12z" />
      <circle cx="1" cy="4" r="5" fill="#12b5cb" />
      <path d="M-9-9V-3M-12-6H-6" stroke="#fff" strokeWidth="1.500" />
    </Poi>
    <Poi x={514} y={584} fill="#34a853" edge="#1e8e3e">
      <path d="M0-13L7-4H4L8 2H5L10 8H2V13H-2V8H-10L-5 2H-8L-4-4H-7z" />
    </Poi>
    <Poi x={579} y={826} fill="#34a853" edge="#1e8e3e">
      {[0, 72, 144, 216, 288].map((a) => (
        <ellipse key={a} cx="0" cy="8" rx="3" ry="4.500" transform={`rotate(${a})`} />
      ))}
    </Poi>
    <Poi x={849} y={439} fill="#f06292" edge="#d8457b">
      <path d="M-13-6H-11V5H11V8H-11V10H-13zM11-1H13V10H11z" />
      <circle cx="-6" cy="-1" r="3" />
      <path d="M-2-5L7-3Q12-1 12 4H-9L-2 2z" />
    </Poi>
    <Poi x={730} y={370} fill="#78909c" edge="#5f7783">
      <path d="M0-10L13-4 0 3-13-4zM-7 2L0 6 7 2V6Q0 13-7 6zM10-3H12V6H10z" />
    </Poi>
    <Poi x={788} y={886} fill="#12b5cb" edge="#0d97a9">
      <path d="M-11-2L-8 0H-3L1-2V4Q0 10-5 11-10 10-11 4zM2-7L5-6 9-8 12-11V-3Q10 1 4 2L2 0z" />
      <path d="M-9 3h3M-4 3h3M-7 7h4M5-3h2M9-4h1" stroke="#12b5cb" strokeWidth="1.500" />
    </Poi>

    <Metro x={850} y={383} />
    <Metro x={983} y={521} />
    <Metro x={893} y={704} />
    <Metro x={1050} y={348} />
    <g transform="translate(46 511)">
      <rect x="-12.500" y="-12.500" width="25" height="25" rx="4" fill="#1a73e8" stroke="#1a66d0" />
      <path d="M-4-8H4Q7-8 7-5V4Q7 6 4 6L6 8H3L2 6H-2L-3 8H-6L-4 6Q-7 6-7 4V-5Q-7-8-4-8z" fill="#fff" />
      <path d="M-5-5H-1V-1H-5zM1-5H5V-1H1zM-4 2h2v2h-2zM2 2h2v2H2z" fill="#1a73e8" />
    </g>

    <Track />

    <g stroke="#fff" strokeWidth="2">
      <path d="M371 482C364 470 344 458 344 439a25 25 0 0 1 50 0C394 458 378 470 371 482z" fill="#ff0033" />
      <path d="M361 432h14v18h-14z" fill="#fff" />
      <path d="M388 476C381 462 362 452 362 434a26 26 0 0 1 53 0C415 452 396 462 388 476z" fill="#49b400" />
      <path d="M380 422L403 435 380 447z" fill="#fff" stroke="none" />
    </g>

    <GoogleMark x="17" y="869">
      <tspan fill="#4285f4">G</tspan>
      <tspan fill="#ea4335">o</tspan>
      <tspan fill="#fbbc04">o</tspan>
      <tspan fill="#4285f4">g</tspan>
      <tspan fill="#34a853">l</tspan>
      <tspan fill="#ea4335">e</tspan>
    </GoogleMark>
  </MapDrawing>
);

/* ---------- page ---------- */

const tabs = ["개요", "통계", "랩", "차트", "장비"];

const stats: { label: string; value: string; unit?: string; zone?: boolean; wide?: boolean }[] = [
  { label: "거리", value: "23.79", unit: "km", wide: true },
  { label: "평균 심박", value: "149", unit: "bpm", zone: true },
  { label: "평균 페이스", value: "5:53", unit: "/km", zone: true },
  { label: "총 시간", value: "2:20:04" },
  { label: "총 칼로리", value: "1,840" },
];

export default function App() {
  return (
    <Screen>
      <GlobalStyle />
      <TopBar>
        <StatusBar>
          <StatusGroup $gap={11}>
            <Carrier />
            <Clock>5:00</Clock>
            <WhoCall />
            <HeartRing />
            <Trophy />
            <MoreDot />
          </StatusGroup>
          <StatusGroup $gap={14}>
            <BatteryLeaf />
            <Leaf />
            <Alarm />
            <Bluetooth />
            <StatusGroup $gap={9}>
              <Wifi />
              <Signal />
            </StatusGroup>
            <Battery />
          </StatusGroup>
        </StatusBar>
        <Toolbar>
          <IconButton $width={84} aria-label="뒤로"><BackArrow /></IconButton>
          <ToolbarTitle>러닝</ToolbarTitle>
          <IconButton $width={136} aria-label="공유"><Share /></IconButton>
          <IconButton $width={84} aria-label="더 보기"><More /></IconButton>
        </Toolbar>
        <Tabs>
          {tabs.map((name, i) => (
            <TabCell key={name}>
              <Tab $active={i === 0} aria-current={i === 0 ? "page" : undefined}>{name}</Tab>
            </TabCell>
          ))}
        </Tabs>
      </TopBar>

      <MapSection>
        <CourseMap />
        <WeatherPill>
          <Temperature>-2°</Temperature>
          <Sun />
          <Wind />
        </WeatherPill>
      </MapSection>

      <Legend>
        <LegendText>더 느림</LegendText>
        <LegendScale>
          {legendScale.map((c, i) => <Swatch key={i} $fill={c} />)}
        </LegendScale>
        <LegendText>더 빠름</LegendText>
      </Legend>

      <ActivityRow>
        <Avatar />
        <ActivityWhen>
          <Runner />
          3월 2일 @ 오전 10:02
        </ActivityWhen>
        <IconButton $width={148} $color={color.muted} aria-label="비공개"><Lock /></IconButton>
        <IconButton $width={148} $color={color.muted} aria-label="즐겨찾기"><Star /></IconButton>
        <IconButton $width={148} $color={color.blue} aria-label="사진 추가"><AddImage /></IconButton>
      </ActivityRow>

      <TitleRow>
        <ActivityTitle>러닝</ActivityTitle>
        <IconButton $width={84} $color={color.muted} aria-label="이름 편집"><Pencil /></IconButton>
      </TitleRow>

      <Body>
        <NoteRow>
          <Prompt>진행 상황이 어떻습니까?</Prompt>
          <NoteButton>메모 추가</NoteButton>
        </NoteRow>
        <StatGrid>
          {stats.map((s) => (
            <Stat key={s.label} $wide={s.wide}>
              <StatLabel>{s.label}</StatLabel>
              <StatValue $wide={s.wide}>
                {s.value}
                {s.unit && <Unit>{s.unit}</Unit>}
                {s.zone && <ZoneButton aria-label={`${s.label} 차트`}><Pulse /></ZoneButton>}
              </StatValue>
            </Stat>
          ))}
        </StatGrid>
      </Body>

      <Likes>여기에 가장 먼저 좋아요를 해보세요.</Likes>

      <SystemNav>
        <IconButton $width={126} aria-label="최근 앱">
          <svg width="40" height="42" viewBox="0 0 40 42" stroke="currentColor" strokeWidth="3.500"><path d="M3 1v40M20 1v40M37 1v40" /></svg>
        </IconButton>
        <IconButton $width={126} aria-label="홈">
          <svg width="42" height="42" viewBox="0 0 42 42" fill="none" stroke="currentColor" strokeWidth="3.500"><rect x="2" y="2" width="38" height="38" rx="12" /></svg>
        </IconButton>
        <IconButton $width={126} aria-label="이전">
          <svg width="26" height="42" viewBox="0 0 26 42" fill="none" stroke="currentColor" strokeWidth="3.500"><path d="M24 1L3 21l21 20" /></svg>
        </IconButton>
      </SystemNav>
    </Screen>
  );
}
